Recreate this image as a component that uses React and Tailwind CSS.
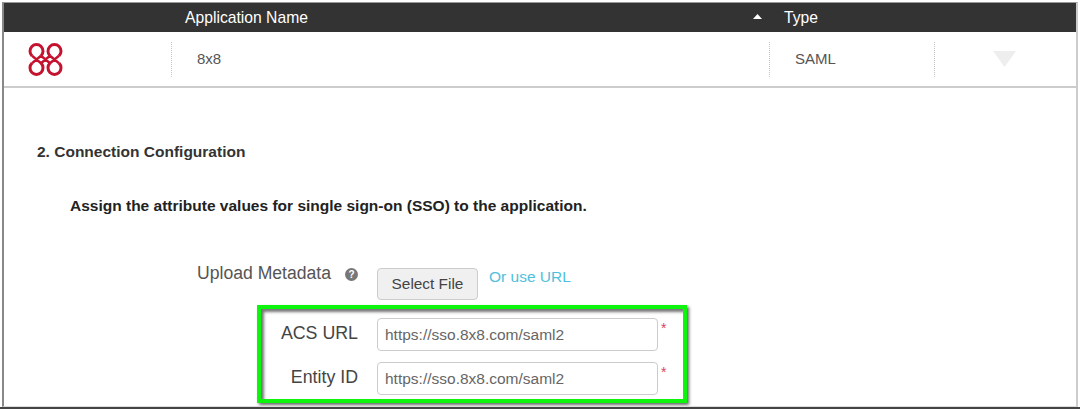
function Logo() {
    return (
        <svg width="36" height="33" viewBox="0 0 36 33" fill="none" stroke="#c4122f" strokeWidth="3">
            <path d="M5 12.8 A6.5 6.5 0 1 1 14 12.8 M23 12.8 A6.5 6.5 0 1 1 32 12.8" />
            <path d="M5 20.2 A6.5 6.5 0 1 0 14 20.2 M23 20.2 A6.5 6.5 0 1 0 32 20.2" />
            <path strokeWidth="2.4" d="M5 12.8 L14 20.2 M14 12.8 L5 20.2 M23 12.8 L32 20.2 M32 12.8 L23 20.2 M14 12.8 L23 20.2 M23 12.8 L14 20.2" />
        </svg>
    );
}

function Divider() {
    return <div className="h-[35px] border-l border-dotted border-[#c4c4c4]"></div>;
}

function FieldRow({ label, value }) {
    return (
        <div className="flex items-center h-[33px]">
            <label className="w-[97px] text-right text-[17.8px] text-[#444] -mt-[3px]">{label}</label>
            <div className="ml-[19px] w-[281px] h-[33px] flex items-center px-[7px] bg-white border border-[#ccc] rounded text-[15.5px] text-[#666]">
                {value}
            </div>
            <span className="ml-[3px] -mt-[14px] text-[14px] leading-none text-[#d9435e]">*</span>
        </div>
    );
}

export default function App() {
    return (
        <div className="w-[1080px] h-[409px] overflow-hidden bg-white pt-[2px] font-['Liberation_Sans',Arial,sans-serif]">
            <div className="ml-[2px] w-[1076px] h-[405px] border-t border-l-2 border-r-2 border-b border-t-[#999] border-l-[#888] border-r-[#ccc] border-b-[#ddd] overflow-hidden">
                {/* Table header */}
                <div className="flex items-center h-[29px] bg-[#333] text-white text-[15.7px]">
                    <span className="ml-[181px] w-[568px]">Application Name</span>
                    <svg width="9" height="5" viewBox="0 0 9 5" className="mb-[2px]">
                        <path d="M0 5 L4.5 0 L9 5 Z" fill="#fff" />
                    </svg>
                    <span className="ml-[22px]">Type</span>
                </div>

                {/* Table row */}
                <div className="flex items-center h-[56px] border-b-2 border-[#ccc] text-[15px] text-[#555]">
                    <div className="w-[167px] pl-[23px] flex items-center"><Logo /></div>
                    <Divider />
                    <span className="ml-[25px] w-[572px]">8x8</span>
                    <Divider />
                    <span className="ml-[25px] w-[139px]">SAML</span>
                    <Divider />
                    <svg width="23" height="16" viewBox="0 0 23 16" className="ml-[58px]">
                        <path d="M0 0 H23 L11.5 16 Z" fill="#eeeeee" />
                    </svg>
                </div>

                {/* Form */}
                <div className="pl-[33px] pt-[56px]">
                    <h3 className="text-[15.5px] font-bold leading-[16px] text-[#333]">2. Connection Configuration</h3>
                    <p className="mt-[38px] ml-[33px] text-[15.5px] font-bold leading-[16px] text-[#222]">
                        Assign the attribute values for single sign-on (SSO) to the application.
                    </p>

                    <div className="flex mt-[49px] ml-[160px] h-[42px]">
                        <span className="text-[17.6px] leading-[20px] text-[#555]">Upload Metadata</span>
                        <span className="ml-[14px] mt-[5px] w-[13px] h-[13px] rounded-full bg-[#777] text-white text-[10px] font-bold leading-[13px] text-center">?</span>
                        <button className="ml-[19px] mt-[5px] w-[101px] h-[32px] bg-[#f0f0f0] border border-[#ccc] rounded text-[15.4px] text-[#444]">Select File</button>
                        <a className="ml-[11px] mt-[4px] text-[15.5px] leading-[20px] text-[#4fc0dc]">Or use URL</a>
                    </div>

                    <div className="ml-[220px] w-[430px] h-[98px] border-[4px] border-[#0df50d] shadow-[2px_2px_3px_#666,inset_3px_3px_3px_#777] pt-[9px] flex flex-col gap-[11px]">
                        <FieldRow label="ACS URL" value="https://sso.8x8.com/saml2" />
                        <FieldRow label="Entity ID" value="https://sso.8x8.com/saml2" />
                    </div>
                </div>
            </div>
            <div className="h-[2px] bg-[#444]"></div>
        </div>
    );
}
